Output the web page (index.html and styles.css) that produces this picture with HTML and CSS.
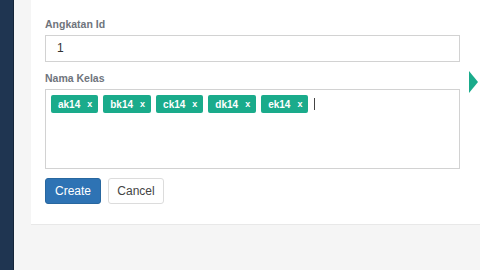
FILE: index.html
```html
<!DOCTYPE html>
<html lang="id">
<head>
  <meta charset="UTF-8">
  <meta name="viewport" content="width=device-width, initial-scale=1.0">
  <title>Kelas - Create</title>
  <link rel="stylesheet" href="styles.css">
</head>
<body>
  <div class="layout">
    <div class="sidebar"></div>

    <div class="main">
      <!-- Form tambah kelas -->
      <div class="panel">
        <div class="form-group">
          <label class="label">Angkatan Id</label>
          <div class="input">1</div>
        </div>

        <div class="form-group">
          <label class="label">Nama Kelas</label>
          <div class="tag-box">
            <span class="tag">ak14<span class="tag-x">x</span></span>
            <span class="tag">bk14<span class="tag-x">x</span></span>
            <span class="tag">ck14<span class="tag-x">x</span></span>
            <span class="tag">dk14<span class="tag-x">x</span></span>
            <span class="tag">ek14<span class="tag-x">x</span></span>
            <span class="caret"></span>
          </div>
        </div>

        <div class="actions">
          <button class="btn btn-primary">Create</button>
          <button class="btn btn-default">Cancel</button>
        </div>
      </div>

      <div class="arrow"></div>
    </div>
  </div>
</body>
</html>
```

FILE: styles.css
```css
body {
  margin: 0;
  padding: 0;
  font-family: 'Liberation Sans', Arial, sans-serif;
  background-color: #f4f4f4;
}
.layout {
  display: flex;
  height: 270px;
  overflow: hidden;
}
.sidebar {
  width: 13px;
  background-color: #1f3551;
  border-right: 1px solid #142539;
  flex-shrink: 0;
}
.main {
  flex: 1;
  position: relative;
  padding-left: 17px;
  background-color: #f5f5f5;
}
.panel {
  background-color: #fff;
  border-bottom: 1px solid #e8e8e8;
  padding: 18px 0 0 14px;
  box-sizing: border-box;
  height: 225px;
}
.form-group {
  margin-bottom: 10px;
}
.label {
  display: block;
  font-size: 10.5px;
  font-weight: bold;
  color: #6f747c;
  margin-bottom: 4px;
  line-height: 13px;
}
.input {
  width: 415px;
  height: 27px;
  box-sizing: border-box;
  border: 1px solid #d2d2d2;
  padding: 0 11px;
  font-size: 12px;
  line-height: 25px;
  color: #333;
}
.tag-box {
  width: 415px;
  height: 80px;
  box-sizing: border-box;
  border: 1px solid #d2d2d2;
  padding: 5px 5px;
  display: flex;
  flex-wrap: wrap;
  align-content: flex-start;
  align-items: center;
  gap: 5px;
}
.tag {
  display: inline-flex;
  align-items: center;
  height: 18px;
  padding: 0 6px 0 7px;
  background-color: #1aab8b;
  color: #fff;
  font-size: 10px;
  font-weight: bold;
  border-radius: 2px;
}
.tag-x {
  margin-left: 7px;
  font-size: 9px;
}
.caret {
  width: 1px;
  height: 12px;
  background-color: #444;
  margin-left: 1px;
}
.actions {
  display: flex;
  gap: 7px;
  margin-top: -1px;
}
.btn {
  height: 26px;
  width: 56px;
  font-family: 'Liberation Sans', Arial, sans-serif;
  font-size: 12px;
  border-radius: 3px;
  padding: 0;
  cursor: pointer;
}
.btn-primary {
  background-color: #2e73b4;
  border: 1px solid #28679f;
  color: #fff;
}
.btn-default {
  background-color: #fff;
  border: 1px solid #dcdcdc;
  color: #444;
}
.arrow {
  position: absolute;
  left: 455px;
  top: 71px;
  width: 0;
  height: 0;
  border-top: 11px solid transparent;
  border-bottom: 11px solid transparent;
  border-left: 9px solid #1aab8b;
}
```
